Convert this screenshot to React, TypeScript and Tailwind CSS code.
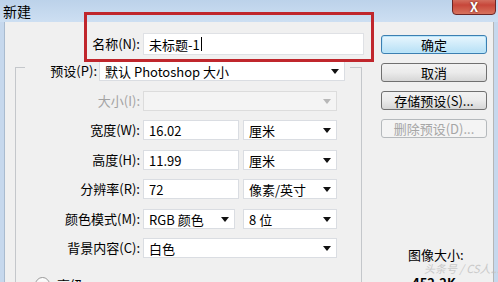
import type { ReactNode } from 'react';

function Arrow({ disabled }: { disabled?: boolean }) {
  return (
    <svg width="8" height="5" viewBox="0 0 8 5" className="shrink-0">
      <polygon points="0,0 8,0 4,5" fill={disabled ? '#b8b8b8' : '#111'} />
    </svg>
  );
}

function Select({ w, text, disabled }: { w: string; text?: string; disabled?: boolean }) {
  return (
    <div
      className={`${w} h-[20px] flex items-center justify-between pl-[5px] pr-[5px] border ${
        disabled ? 'bg-[#f4f4f4] border-[#dcdcdc]' : 'bg-white border-[#dadde2]'
      }`}
    >
      <span className="leading-none whitespace-nowrap">{text}</span>
      <Arrow disabled={disabled} />
    </div>
  );
}

function Input({ w, text }: { w: string; text: string }) {
  return (
    <div className={`${w} h-[20px] flex items-center pl-[5px] bg-white border border-[#dadde2]`}>
      <span className="leading-none">{text}</span>
    </div>
  );
}

function Row({ label, mt, disabled, children }: { label: string; mt: string; disabled?: boolean; children: ReactNode }) {
  return (
    <div className={`flex items-center ${mt}`}>
      <div className={`w-[124px] text-right whitespace-nowrap ${disabled ? 'text-[#a3a3a3]' : 'text-black'}`}>{label}</div>
      <div className="ml-[3px] flex gap-[4px]">{children}</div>
    </div>
  );
}

function Btn({ children, variant }: { children: ReactNode; variant?: 'default' | 'disabled' }) {
  const style =
    variant === 'default'
      ? 'border-[#3c7fb1] bg-gradient-to-b from-[#e8f6fd] to-[#b6e0f6] shadow-[inset_0_0_0_1px_#b9e6fb]'
      : variant === 'disabled'
      ? 'border-[#b5b9bc] bg-[#f4f4f4] text-[#a6a6a6]'
      : 'border-[#707070] bg-gradient-to-b from-[#f2f2f2] via-[#ebebeb] to-[#d6d6d6]';
  return (
    <div className={`w-[106px] h-[19px] rounded-[3px] border flex items-center justify-center leading-none ${style}`}>
      {children}
    </div>
  );
}

export default function App() {
  return (
    <div className="relative w-[498px] h-[282px] overflow-hidden bg-[#c6d8ed] font-['Noto_Sans_CJK_SC',sans-serif] text-[13px] text-black">
      {/* Title bar */}
      <div className="h-[22px] flex justify-between bg-gradient-to-b from-[#bcd2ea] to-[#cddff2]">
        <span className="ml-[3px] mt-[2px] text-[14px] leading-[18px]">新建</span>
        <div className="-mt-[5px] mr-[2px] w-[44px] h-[20px] rounded-b-[4px] border border-[#6b2626] bg-gradient-to-b from-[#d98a7a] via-[#c7463a] to-[#d7725d] flex items-center justify-center">
          <span className="mt-[2px] text-white font-bold text-[13px] leading-none [text-shadow:0_0_2px_#4a1010]">X</span>
        </div>
      </div>

      {/* Body */}
      <div className="ml-[4px] mr-[4px] h-[260px] flex bg-[#f0f0f0] border-l border-[#a9bbcf] border-r border-r-[#b5b5b5]">
        {/* Left */}
        <div className="w-[365px] shrink-0">
          <div className="mt-[11px] flex items-center">
            <div className="w-[135px] text-right whitespace-nowrap">名称(N):</div>
            <div className="ml-[3px] w-[221px] h-[22px] flex items-center pl-[5px] bg-white border border-[#dfe1e5]">
              <span className="leading-none">未标题-1</span>
              <span className="ml-[1px] w-px h-[14px] bg-black" />
            </div>
          </div>

          {/* Group box */}
          <div className="mt-[12px] ml-[10px] w-[347px] h-[300px] border-l border-t border-r border-[#c4c7cb]">
            <div className="-mt-[7px] ml-[9px] w-[325px] h-[20px] flex items-center bg-[#f0f0f0]">
              <div className="w-[72px] text-right whitespace-nowrap">预设(P):</div>
              <div className="ml-[2px]">
                <Select w="w-[246px]" text="默认 Photoshop 大小" />
              </div>
            </div>
            <Row label="大小(I):" mt="mt-[10px]" disabled>
              <Select w="w-[194px]" disabled />
            </Row>
            <Row label="宽度(W):" mt="mt-[9px]">
              <Input w="w-[96px]" text="16.02" />
              <Select w="w-[94px]" text="厘米" />
            </Row>
            <Row label="高度(H):" mt="mt-[10px]">
              <Input w="w-[96px]" text="11.99" />
              <Select w="w-[94px]" text="厘米" />
            </Row>
            <Row label="分辨率(R):" mt="mt-[9px]">
              <Input w="w-[96px]" text="72" />
              <Select w="w-[94px]" text="像素/英寸" />
            </Row>
            <Row label="颜色模式(M):" mt="mt-[10px]">
              <Select w="w-[92px]" text="RGB 颜色" />
              <div className="ml-[4px]">
                <Select w="w-[94px]" text="8 位" />
              </div>
            </Row>
            <Row label="背景内容(C):" mt="mt-[9px]">
              <Select w="w-[194px]" text="白色" />
            </Row>
            <div className="mt-[19px] ml-[19px] flex items-start gap-[7px]">
              <div className="w-[15px] h-[15px] rounded-full border border-[#9a9a9a] bg-gradient-to-b from-white to-[#e2e2e2]" />
              <span className="mt-[1px] leading-none">高级</span>
            </div>
          </div>
        </div>

        {/* Right buttons */}
        <div className="ml-[11px] mt-[13px] flex flex-col">
          <div className="flex flex-col gap-[9px]">
            <Btn variant="default">确定</Btn>
            <Btn>取消</Btn>
            <Btn>存储预设(S)...</Btn>
            <Btn variant="disabled">删除预设(D)...</Btn>
          </div>
          <div className="mt-[109px] pl-[27px] leading-[16px]">图像大小:</div>
          <div className="mt-[12px] pl-[31px] leading-[16px] font-bold">452.2K</div>
        </div>
      </div>

      {/* Watermark */}
      <div className="absolute left-[424px] top-[263px] text-[11px] italic leading-none text-[#c9c9c9] whitespace-nowrap">头条号 / CS人...</div>

      {/* Red highlight */}
      <div className="absolute left-[84px] top-[12px] w-[290px] h-[50px] border-[3px] border-[#c0262c]" />
    </div>
  );
}
